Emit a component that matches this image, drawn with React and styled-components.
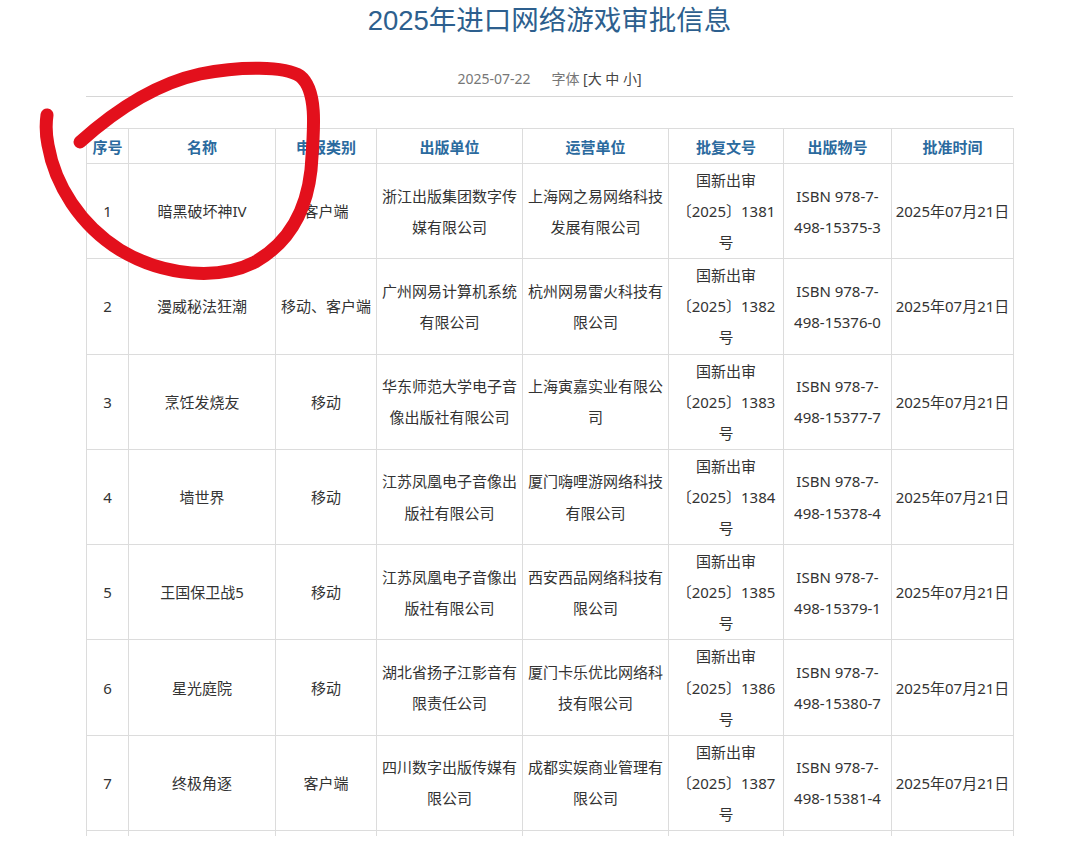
import React from "react";
import styled, { createGlobalStyle } from "styled-components";

const GlobalStyle = createGlobalStyle`
  body {
    margin: 0;
    background: #fff;
    font-family: "Liberation Sans", "Noto Sans CJK SC", sans-serif;
  }
`;

const Page = styled.div`
  position: relative;
  width: 1080px;
  height: 836px;
  overflow: hidden;
`;

const Article = styled.div`
  margin-left: 86px;
  width: 927px;
`;

const Title = styled.h1`
  margin: 0;
  font-size: 27.5px;
  line-height: 41px;
  font-weight: normal;
  color: #2d5f8e;
  text-align: center;
`;

const Meta = styled.div`
  margin-top: 28px;
  padding-bottom: 7px;
  border-bottom: 1px solid #d6d6d6;
  text-align: center;
  font-size: 14px;
  line-height: 20px;
  color: #777;
  font-family: "Noto Sans", "Noto Sans CJK SC", sans-serif;
`;

const MetaDate = styled.span`
  margin-right: 21px;
`;

const FontSize = styled.span`
  color: #444;
`;

const Table = styled.table`
  margin-top: 31px;
  width: 927px;
  table-layout: fixed;
  border-collapse: collapse;
  font-size: 15px;
  color: #333;
  font-family: "Noto Sans", "Noto Sans CJK SC", sans-serif;
`;

const Head = styled.th`
  height: 34px;
  padding: 0;
  border: 1px solid #dcdcdc;
  color: #2b6a9e;
  font-weight: bold;
  text-align: center;
  font-family: "Noto Sans CJK SC", sans-serif;
`;

const Cell = styled.td`
  padding: 1px 3px 0;
  border: 1px solid #dcdcdc;
  line-height: 31.1px;
  height: 93.3px;
  text-align: center;
  vertical-align: middle;
  word-break: break-all;
`;

const Scribble = styled.svg`
  position: absolute;
  left: 0;
  top: 0;
  pointer-events: none;
`;

const columns = [
  { title: "序号", width: 42 },
  { title: "名称", width: 147 },
  { title: "申报类别", width: 101 },
  { title: "出版单位", width: 146 },
  { title: "运营单位", width: 146 },
  { title: "批复文号", width: 115 },
  { title: "出版物号", width: 108 },
  { title: "批准时间", width: 122 },
];

const rows = [
  ["暗黑破坏神IV", "客户端", "浙江出版集团数字传媒有限公司", "上海网之易网络科技发展有限公司", "1381", "15375-3"],
  ["漫威秘法狂潮", "移动、客户端", "广州网易计算机系统有限公司", "杭州网易雷火科技有限公司", "1382", "15376-0"],
  ["烹饪发烧友", "移动", "华东师范大学电子音像出版社有限公司", "上海寅嘉实业有限公司", "1383", "15377-7"],
  ["墙世界", "移动", "江苏凤凰电子音像出版社有限公司", "厦门嗨哩游网络科技有限公司", "1384", "15378-4"],
  ["王国保卫战5", "移动", "江苏凤凰电子音像出版社有限公司", "西安西品网络科技有限公司", "1385", "15379-1"],
  ["星光庭院", "移动", "湖北省扬子江影音有限责任公司", "厦门卡乐优比网络科技有限公司", "1386", "15380-7"],
  ["终极角逐", "客户端", "四川数字出版传媒有限公司", "成都实娱商业管理有限公司", "1387", "15381-4"],
];

const App = () => {
  return (
    <Page>
      <GlobalStyle />
      <Article>
        <Title>2025年进口网络游戏审批信息</Title>
        <Meta>
          <MetaDate>2025-07-22</MetaDate>
          字体 <FontSize>[大 中 小]</FontSize>
        </Meta>
        <Table>
          <colgroup>
            {columns.map((c) => (
              <col key={c.title} style={{ width: c.width }} />
            ))}
          </colgroup>
          <thead>
            <tr>
              {columns.map((c) => (
                <Head key={c.title}>{c.title}</Head>
              ))}
            </tr>
          </thead>
          <tbody>
            {rows.map((r, i) => (
              <tr key={i}>
                <Cell>{i + 1}</Cell>
                <Cell>{r[0]}</Cell>
                <Cell>{r[1]}</Cell>
                <Cell>{r[2]}</Cell>
                <Cell>{r[3]}</Cell>
                <Cell>
                  国新出审
                  <br />
                  〔2025〕{r[4]}
                  <br />号
                </Cell>
                <Cell>
                  ISBN 978-7-
                  <br />
                  498-{r[5]}
                </Cell>
                <Cell>2025年07月21日</Cell>
              </tr>
            ))}
            <tr>
              {columns.map((c) => (
                <Cell key={c.title} />
              ))}
            </tr>
          </tbody>
        </Table>
      </Article>
      <Scribble width="1080" height="854" viewBox="0 0 1080 854">
        <path
          d="M80 142 C 110 115, 150 85, 200 74 C 240 66, 285 66, 300 76 C 318 90, 314 130, 311 170 C 306 215, 285 245, 255 262 C 220 280, 165 277, 120 250 C 80 225, 55 185, 48 145 C 45 130, 46 122, 47 115"
          fill="none"
          stroke="#e3101c"
          strokeWidth="13"
          strokeLinecap="round"
          strokeLinejoin="round"
        />
      </Scribble>
    </Page>
  );
};

export default App;
